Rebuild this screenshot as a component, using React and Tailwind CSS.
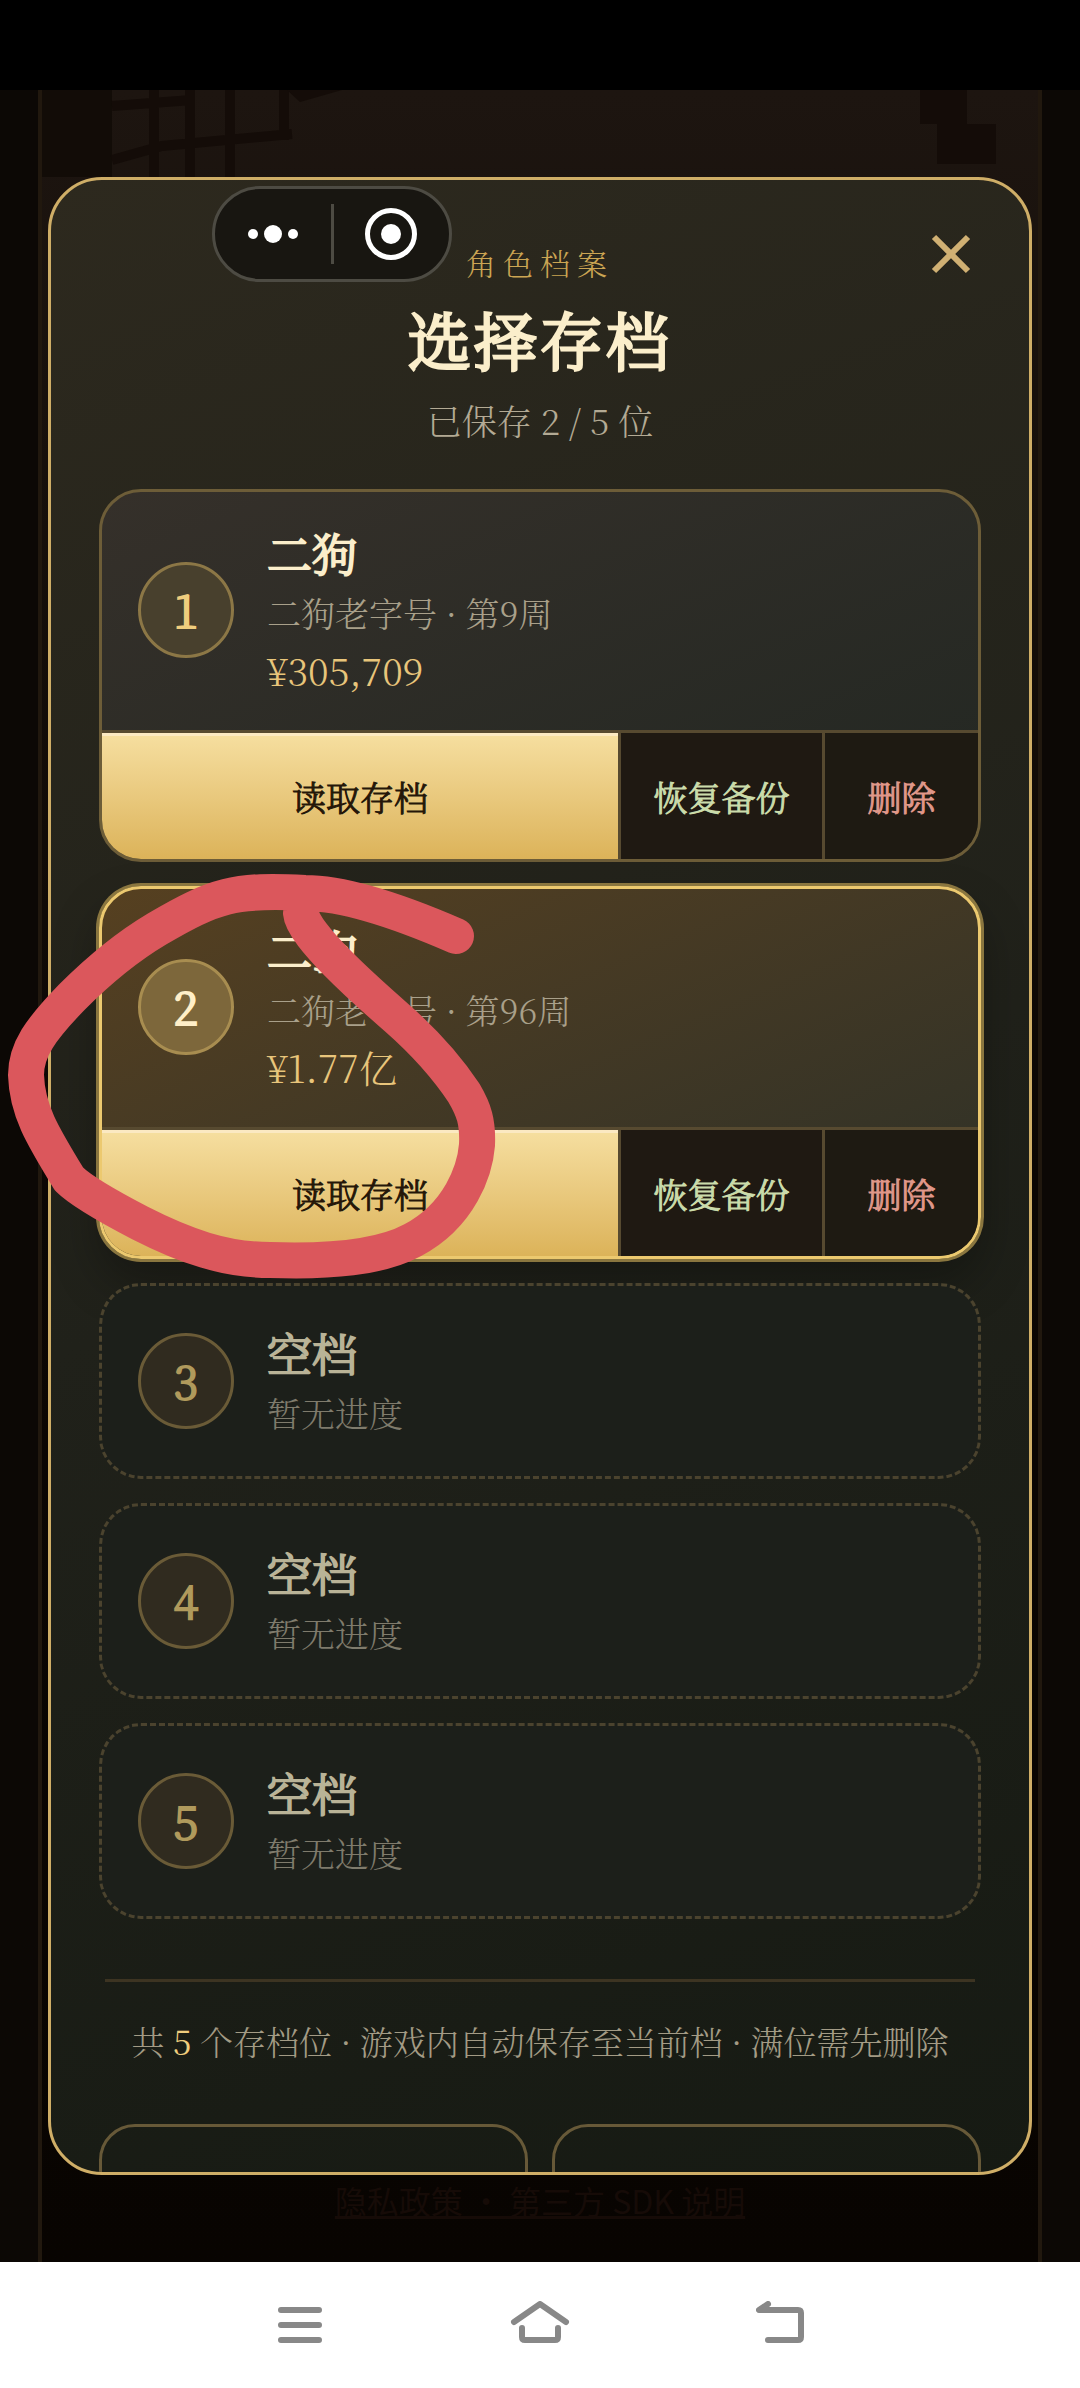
import clsx from "clsx";

const slots = [
  { id: 1, name: "二狗", detail: "二狗老字号 · 第9周", money: "¥305,709" },
  { id: 2, name: "二狗", detail: "二狗老字号 · 第96周", money: "¥1.77亿", active: true },
  { id: 3 },
  { id: 4 },
  { id: 5 },
];

function SlotNumber({ slot }) {
  return (
    <span
      className={clsx(
        "flex size-24 shrink-0 items-center justify-center rounded-full border-3 pb-0.5 text-[45px] font-light [-webkit-text-stroke:2px]",
        slot.active && "border-[#a88d50] bg-[#7d673b] text-[#ffefc8]",
        !slot.active && slot.name && "border-[#8c7746] bg-[#48402d] text-[#efcd7e]",
        !slot.name && "border-[#6a5b37] bg-[#302b1f] text-[#b09a5c]"
      )}
    >
      {slot.id}
    </span>
  );
}

function SavedSlot({ slot }) {
  return (
    <li
      className={clsx(
        "overflow-hidden rounded-[42px] border-3",
        slot.active
          ? "border-[#ecc96f] bg-linear-to-br from-[#564020] to-[#2d3027] shadow-[0_0_0_3px_#8a763f,0_24px_48px_rgba(0,0,0,0.3)]"
          : "border-[#6d5d38] bg-linear-to-br from-[#35302a] to-[#222722]"
      )}
    >
      <div className="flex h-[238px] items-center gap-[33px] px-9 pb-0.5">
        <SlotNumber slot={slot} />
        <div>
          <h2 className="text-[45px] leading-[62px] font-light text-[#fbeecb] [-webkit-text-stroke:2px]">{slot.name}</h2>
          <p className="text-[34px] leading-[57px] text-[#a9a08a]">{slot.detail}</p>
          <p className="text-[38px] leading-[58px] text-[#e8c57b]">{slot.money}</p>
        </div>
      </div>
      <div className="grid h-[129px] grid-cols-[1fr_204px_156px] border-t-3 border-[#574a30] text-[34px] [-webkit-text-stroke:1px]">
        <button className="bg-linear-to-b from-[#f6dfa0] to-[#dcb359] text-[#241608] shadow-[inset_0_3px_0_#fbe9c2]">
          读取存档
        </button>
        <button className="border-l-3 border-[#574a30] bg-[#1f1912] text-[#cbdcab]">恢复备份</button>
        <button className="border-l-3 border-[#574a30] bg-[#1e1a12] text-[#e0988a]">删除</button>
      </div>
    </li>
  );
}

function EmptySlot({ slot }) {
  return (
    <li className="flex h-[196px] items-center gap-[33px] rounded-[42px] border-3 border-dashed border-[#4b432e] bg-[#1c1f1a] px-9">
      <SlotNumber slot={slot} />
      <div>
        <h2 className="text-[45px] leading-[62px] font-light text-[#b9b397] [-webkit-text-stroke:2px]">空档</h2>
        <p className="text-[34px] leading-[57px] text-[#7f7b6c]">暂无进度</p>
      </div>
    </li>
  );
}

export default function App() {
  return (
    <div className="relative flex min-h-screen flex-col bg-black font-['Noto_Serif_CJK_SC','Noto_Serif_SC','Liberation_Serif','Noto_Sans_CJK_SC',serif] font-light">
      <div className="h-[90px]" />
      <main className="relative flex grow bg-[#0c0805] px-[38px]">
        <div className="w-full border-x-4 border-[#21180e] bg-linear-to-b from-[#1d1510] via-[#0c0704] to-[#080401] px-1.5 pt-[87px]">
          {/* window lattice behind the dialog */}
          <svg viewBox="0 0 996 87" className="pointer-events-none absolute top-0 left-[42px] w-[996px]" fill="none" stroke="#140c08" strokeWidth="10">
            <rect width="70" height="87" fill="#120c07" stroke="none" />
            <path d="M112 0V87M148 0V87M188 0V87M70 16L150 10M70 70L120 56L250 44M242 0V50" />
            <path d="M245 0H300L258 12ZM878 0H925V34H954V74H895V34H878Z" fill="#140c08" stroke="none" />
          </svg>
          <section className="relative h-[1998px] overflow-hidden rounded-[54px] border-3 border-[#cfae67] bg-linear-160 from-[#2d291e] via-[#20211a] to-[#161a13] px-12">
            <button aria-label="关闭" className="absolute top-11 right-12 flex size-15 items-center justify-center">
              <svg viewBox="0 0 40 40" className="size-10" fill="none" stroke="#d0b073" strokeWidth="6">
                <path d="M3 3L37 37M37 3L3 37" />
              </svg>
            </button>
            <header className="flex flex-col items-center pt-[60px]">
              <p className="text-[30px] leading-[45px] tracking-[7px] text-[#cba553]">角色档案</p>
              <h1 className="mt-2 text-[63px] leading-[90px] tracking-[3px] text-[#fbeecb] [-webkit-text-stroke:3px]">选择存档</h1>
              <p className="mt-3 text-[35px] leading-[51px] text-[#b3aa94]">已保存 2 / 5 位</p>
            </header>
            <ul className="mt-[43px] flex flex-col gap-6">
              {slots.map((slot) =>
                slot.name ? <SavedSlot key={slot.id} slot={slot} /> : <EmptySlot key={slot.id} slot={slot} />
              )}
            </ul>
            <p className="mx-1.5 mt-[60px] border-t-3 border-[#3d3422] pt-8 text-center text-[33px] leading-[54px] whitespace-nowrap text-[#a39b85]">
              共 <b className="font-normal text-[#efcd7e]">5</b> 个存档位 · 游戏内自动保存至当前档 · 满位需先删除
            </p>
            <div className="mt-14 grid grid-cols-2 gap-6">
              <button aria-label="新建" className="h-[126px] rounded-[36px] border-3 border-[#675938]" />
              <button aria-label="返回" className="h-[126px] rounded-[36px] border-3 border-[#675938]" />
            </div>
          </section>
          <p className="text-center font-['Noto_Sans_CJK_SC',sans-serif] text-[32px] leading-[50px] font-normal text-[#160b07]">
            <a href="#privacy" className="underline">隐私政策 ・ 第三方 SDK 说明</a>
          </p>
        </div>
      </main>

      <nav className="grid h-[126px] grid-cols-[1fr_600px_1fr] bg-white">
        <div />
        <div className="flex items-center justify-between px-9">
          <button aria-label="菜单">
            <svg viewBox="0 0 48 48" className="size-12" fill="none" stroke="#888" strokeWidth="6" strokeLinecap="round">
              <path d="M5 9H43M5 24H43M5 39H43" />
            </svg>
          </button>
          <button aria-label="主页">
            <svg viewBox="0 0 60 48" className="h-12 w-15" fill="none" stroke="#888" strokeWidth="6" strokeLinecap="round" strokeLinejoin="round">
              <path d="M4 21L30 3L56 21M12 27V36Q12 39 15 39H45Q48 39 48 36V27" />
            </svg>
          </button>
          <button aria-label="返回上页">
            <svg viewBox="0 0 48 48" className="size-12" fill="none" stroke="#888" strokeWidth="6" strokeLinecap="round" strokeLinejoin="round">
              <path d="M12 3L3 9H42Q45 9 45 12V36Q45 39 42 39H12" />
            </svg>
          </button>
        </div>
        <div />
      </nav>

      {/* mini program capsule */}
      <div className="absolute top-[186px] left-[212px] flex h-24 w-60 items-center rounded-full border-3 border-[#4d4b43] bg-[#181611]">
        <button aria-label="更多" className="flex flex-1 items-center justify-center gap-1.5">
          <span className="size-2.5 rounded-full bg-white" />
          <span className="size-[18px] rounded-full bg-white" />
          <span className="size-2.5 rounded-full bg-white" />
        </button>
        <span className="h-15 w-[3px] bg-[#4d4b43]" />
        <button aria-label="退出" className="flex flex-1 items-center justify-center">
          <span className="flex size-[52px] items-center justify-center rounded-full border-5 border-white">
            <span className="size-5 rounded-full bg-white" />
          </span>
        </button>
      </div>

      {/* hand drawn marker */}
      <svg viewBox="0 0 520 420" className="pointer-events-none absolute top-[860px] left-0 w-[520px]" fill="none" stroke="#db575c" strokeWidth="36" strokeLinecap="round" strokeLinejoin="round">
        <path d="M456 76C410 56 350 33 305 33C235 29 215 35 157 69C120 91 92 117 72 137C40 170 26 190 26 215C27 250 42 275 69 319C82 332 115 350 140 363C185 386 225 400 270 400C330 402 380 398 413 380C460 355 475 310 477 285C478 262 474 250 464 233C450 212 430 187 397 158C365 130 303 75 301 53" />
      </svg>
    </div>
  );
}
